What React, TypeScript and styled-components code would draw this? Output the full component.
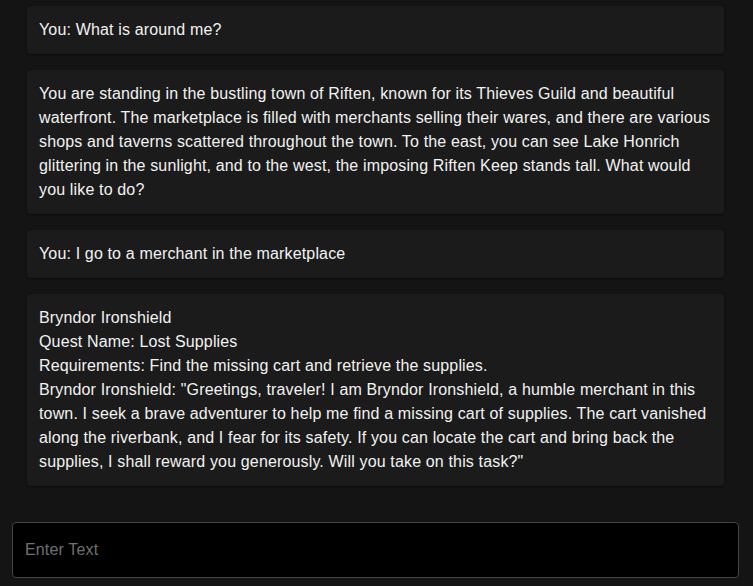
import styled, { createGlobalStyle } from "styled-components";

const GlobalStyle = createGlobalStyle`
  html, body {
    margin: 0;
    padding: 0;
    background: #141414;
    font-family: "Liberation Sans", Arial, sans-serif;
  }
`;

const messages = [
  "You: What is around me?",
  "You are standing in the bustling town of Riften, known for its Thieves Guild and beautiful waterfront. The marketplace is filled with merchants selling their wares, and there are various shops and taverns scattered throughout the town. To the east, you can see Lake Honrich glittering in the sunlight, and to the west, the imposing Riften Keep stands tall. What would you like to do?",
  "You: I go to a merchant in the marketplace",
  'Bryndor Ironshield\nQuest Name: Lost Supplies\nRequirements: Find the missing cart and retrieve the supplies.\nBryndor Ironshield: "Greetings, traveler! I am Bryndor Ironshield, a humble merchant in this town. I seek a brave adventurer to help me find a missing cart of supplies. The cart vanished along the riverbank, and I fear for its safety. If you can locate the cart and bring back the supplies, I shall reward you generously. Will you take on this task?"',
];

export default function App() {
  return (
    <>
      <GlobalStyle />
      <Page>
        <Chat>
          {messages.map((m, i) => (
            <Message key={i}>{m}</Message>
          ))}
        </Chat>
        <InputBox placeholder="Enter Text" />
      </Page>
    </>
  );
}

const Page = styled.div`
  min-height: 586px;
  box-sizing: border-box;
  padding: 6px 0 8px;
  display: flex;
  flex-direction: column;
  background: #141414;
`;

const Chat = styled.div`
  display: flex;
  flex-direction: column;
  gap: 16px;
  margin: 0 29px 0 27px;
`;

const Message = styled.div`
  background: #1b1b1b;
  color: #f2f2f2;
  border-radius: 4px;
  padding: 12px;
  font-size: 16px;
  line-height: 24px;
  letter-spacing: 0.15px;
  white-space: pre-wrap;
  box-shadow: 0 2px 1px -1px rgba(0, 0, 0, 0.2), 0 1px 1px 0 rgba(0, 0, 0, 0.14),
    0 1px 3px 0 rgba(0, 0, 0, 0.12);
`;

const InputBox = styled.input`
  margin: 36px 14px 0 12px;
  height: 56px;
  box-sizing: border-box;
  background: #000;
  border: 1px solid #454545;
  border-radius: 4px;
  padding: 0 12px;
  color: #fff;
  font-family: "Liberation Sans", Arial, sans-serif;
  font-size: 16px;
  letter-spacing: 0.15px;
  outline: none;

  &::placeholder {
    color: #707070;
  }
`;
